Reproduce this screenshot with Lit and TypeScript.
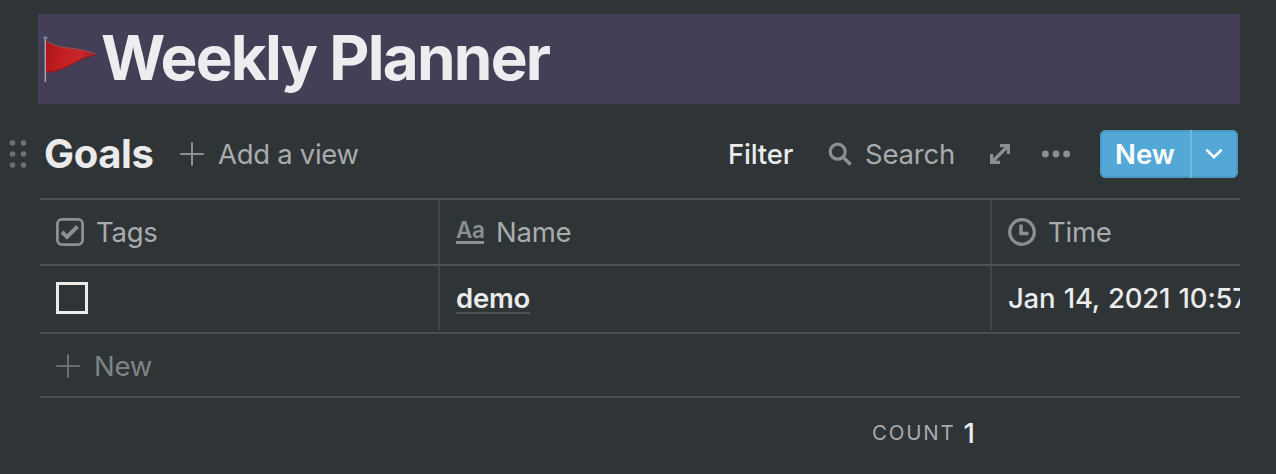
import { LitElement, html, css, svg } from "lit";
import { customElement } from "lit/decorators.js";

const plus = html`<svg class="plus" width="24" height="24" viewBox="0 0 24 24">
  <path d="M12 1V23M1 12H23" stroke="currentColor" stroke-width="2" stroke-linecap="round" />
</svg>`;

const gripDots = [3.5, 14.5].map((cx) => [3, 14, 25].map((cy) => svg`<circle cx=${cx} cy=${cy} r="2.8" />`));

@customElement("app-root")
export class AppRoot extends LitElement {
  static styles = css`
    :host {
      display: block;
      width: 1276px;
      height: 474px;
      overflow: hidden;
      box-sizing: border-box;
      padding-top: 14px;
      background: #2f3437;
      color: #ebebeb;
      font-family: Inter, "Liberation Sans", sans-serif;
      font-size: 27.5px;
      white-space: nowrap;
    }
    svg { display: block; flex: none; fill: currentColor; }
    .plus { fill: none; }
    .banner {
      display: flex;
      align-items: center;
      box-sizing: border-box;
      width: 1202px;
      height: 90px;
      margin-left: 38px;
      padding-left: 4px;
      background: #443f57;
    }
    .title {
      margin: 0 0 0 3px;
      font-size: 62px;
      line-height: 88px;
      height: 90px;
      font-weight: 700;
      color: #ededf0;
      letter-spacing: -1.75px;
    }
    .toolbar {
      display: flex;
      align-items: center;
      height: 94px;
      padding: 6px 38px 0 9px;
      box-sizing: border-box;
    }
    .grip { color: #6c7072; width: 35px; }
    .goals { width: 136px; font-size: 40px; font-weight: 700; letter-spacing: -0.35px; padding-bottom: 2px; }
    .muted { color: #a9abac; }
    .icon { color: #8a8f92; }
    .add { display: flex; align-items: center; gap: 14px; letter-spacing: -0.3px; }
    .filter { margin-left: auto; width: 100px; letter-spacing: -0.2px; font-weight: 450; }
    .search { display: flex; align-items: center; gap: 12px; width: 162px; letter-spacing: -0.2px; }
    .expand { width: 52px; }
    .more { width: 58px; }
    .button {
      display: flex;
      width: 138px;
      height: 48px;
      box-sizing: border-box;
      border-radius: 6px;
      background: #54a8d8;
      box-shadow: inset 0 0 0 2px #4b99c5;
      color: #fff;
      line-height: 48px;
    }
    .button-main { width: 90px; box-sizing: border-box; padding-left: 15px; font-weight: 600; }
    .button-drop { flex: 1; border-left: 2px solid #73b9df; display: flex; align-items: center; padding-left: 13px; }
    .table { width: 1200px; margin-left: 40px; border-top: 2px solid #4c5154; overflow: hidden; }
    .row { display: grid; grid-template-columns: 400px 552px 248px; border-bottom: 2px solid #4c5154; }
    .head { height: 64px; color: #a9abac; letter-spacing: -0.25px; }
    .body { height: 66px; font-weight: 450; }
    .cell {
      display: flex;
      align-items: center;
      box-sizing: border-box;
      min-width: 0;
      height: 64px;
      padding-left: 16px;
      border-right: 2px solid #3f4447;
      overflow: hidden;
    }
    .cell:last-child { border-right: 0; }
    .head .cell { gap: 12px; }
    .box { width: 32px; height: 32px; border: 3px solid #ebebeb; box-sizing: border-box; }
    .type { width: 28px; height: 20px; border-bottom: 3px solid #8a8f92; color: #8a8f92; font-size: 22.5px; line-height: 18px; font-weight: 600; letter-spacing: -0.4px; }
    .name { font-weight: 600; line-height: 30px; height: 29px; padding-top: 1px; border-bottom: 2px solid #4c5154; letter-spacing: -0.25px; }
    .date { letter-spacing: -0.2px; word-spacing: 1.2px; }
    .new {
      display: flex;
      align-items: center;
      gap: 14px;
      height: 61px;
      padding: 1px 0 0 16px;
      color: #7f8385;
      letter-spacing: -0.2px;
      border-bottom: 2px solid #4c5154;
    }
    .new svg { color: #6b6f72; }
    .footer { display: flex; align-items: center; width: 935px; justify-content: flex-end; line-height: 68px; }
    .count { font-size: 20.5px; letter-spacing: 1.8px; color: #a9abac; margin-right: 8px; line-height: 69px; }
    .total { font-weight: 450; }
    .muted, .head .cell > span:last-child, .count, .new { font-weight: 430; }
  `;

  render() {
    return html`
      <header class="banner">
        <svg width="56" height="60" viewBox="0 0 56 60">
          <defs>
            <linearGradient id="cloth" x1="0" y1="0.2" x2="1" y2="0.4">
              <stop offset="0" stop-color="#ad1417" />
              <stop offset="0.4" stop-color="#c42022" />
              <stop offset="0.7" stop-color="#c62628" />
              <stop offset="1" stop-color="#a01c20" />
            </linearGradient>
          </defs>
          <path d="M4 11.5C15 18.5 24 18 36 20C44 21 50 23.5 55 25.5C39 26.5 22 44.5 4 43.5Z" fill="url(#cloth)" />
          <path d="M5 12.5C15 19 24 18 36 20.5C44 21.5 50 23.5 54 25.5" fill="none" stroke="#965058" stroke-width="1" />
          <path d="M54 26C38 27.5 22 43.5 5 43" fill="none" stroke="#871820" stroke-width="1" />
          <path d="M3.3 9V53" stroke="#a4a4ae" stroke-width="1.5" />
          <ellipse cx="3.4" cy="8.8" rx="2.2" ry="1.6" fill="#70839a" />
        </svg>
        <h1 class="title">Weekly Planner</h1>
      </header>
      <nav class="toolbar">
        <div class="grip"><svg width="18" height="28" viewBox="0 0 18 28">${gripDots}</svg></div>
        <div class="goals">Goals</div>
        <div class="add icon">${plus}<span class="muted">Add a view</span></div>
        <div class="filter">Filter</div>
        <div class="search icon">
          <svg width="25" height="25" viewBox="0 0 25 25">
            <circle cx="9.7" cy="9.7" r="7.5" fill="none" stroke="currentColor" stroke-width="3.2" />
            <path d="M15 15L22.5 22.5" stroke="currentColor" stroke-width="3.6" />
          </svg>
          <span class="muted">Search</span>
        </div>
        <div class="expand icon">
          <svg width="20" height="20" viewBox="0 0 20 20">
            <path d="M10 1.6H18.4V10M1.6 10V18.4H10M2.5 17.5L17.5 2.5" fill="none" stroke="currentColor" stroke-width="3.2" />
          </svg>
        </div>
        <div class="more icon">
          <svg width="28" height="8" viewBox="0 0 28 8">
            <circle cx="3.4" cy="4" r="3.4" /><circle cx="14" cy="4" r="3.4" /><circle cx="24.6" cy="4" r="3.4" />
          </svg>
        </div>
        <div class="button">
          <div class="button-main">New</div>
          <div class="button-drop">
            <svg width="18" height="12" viewBox="0 0 18 12">
              <path d="M1.4 1.6L9 9.2L16.6 1.6" fill="none" stroke="#fff" stroke-width="2.6" />
            </svg>
          </div>
        </div>
      </nav>
      <main class="table">
        <div class="row head">
          <div class="cell">
            <svg class="icon" width="28" height="28" viewBox="0 0 28 28">
              <rect x="1.4" y="1.4" width="25.2" height="25.2" rx="4.5" fill="none" stroke="currentColor" stroke-width="2.8" />
              <path d="M6 14L11 19L21.5 8.5" fill="none" stroke="currentColor" stroke-width="4" />
            </svg>
            <span>Tags</span>
          </div>
          <div class="cell"><span class="type">Aa</span><span>Name</span></div>
          <div class="cell">
            <svg class="icon" width="28" height="28" viewBox="0 0 28 28">
              <circle cx="14" cy="14" r="12.3" fill="none" stroke="currentColor" stroke-width="3.3" />
              <path d="M13 6.5V15.5H20.5" fill="none" stroke="currentColor" stroke-width="3.5" />
            </svg>
            <span>Time</span>
          </div>
        </div>
        <div class="row body">
          <div class="cell"><div class="box"></div></div>
          <div class="cell"><span class="name">demo</span></div>
          <div class="cell"><span class="date">Jan 14, 2021 10:57</span></div>
        </div>
        <div class="new">${plus}<span>New</span></div>
        <div class="footer"><span class="count">COUNT</span><span class="total">1</span></div>
      </main>
    `;
  }
}
